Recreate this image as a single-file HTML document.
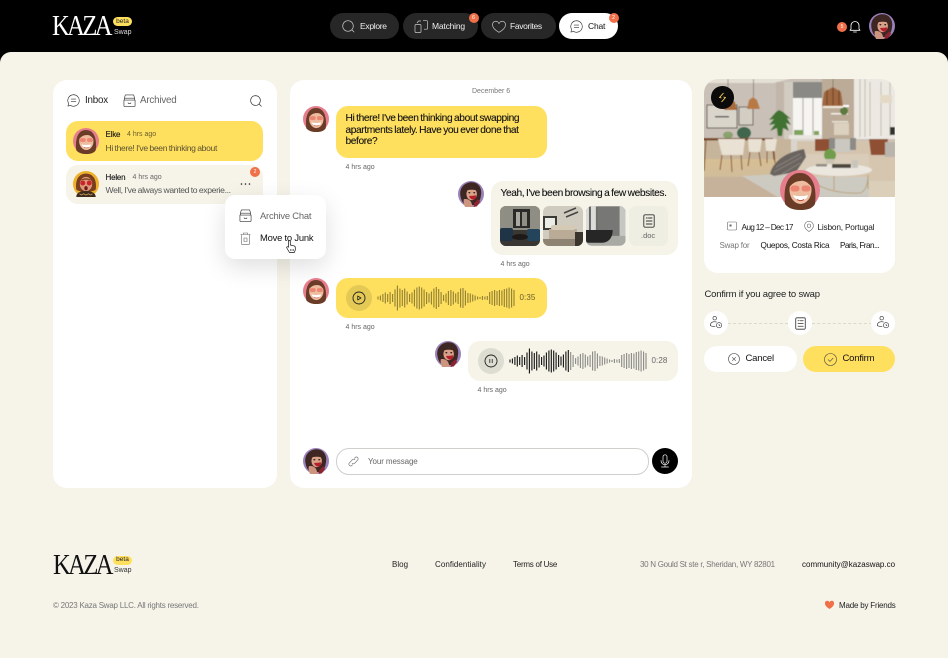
<!DOCTYPE html>
<html><head><meta charset="utf-8"><title>Kaza Swap</title>
<style>
*{box-sizing:border-box}
html,body{margin:0;padding:0;width:948px;height:658px;overflow:hidden;background:#000}
body{font-family:"Liberation Sans",sans-serif;position:relative;color:#111}
.a,.t{position:absolute}
.t{white-space:nowrap;line-height:12px;height:12px;letter-spacing:-.2px}
.b{font-size:10.2px;letter-spacing:-.4px;word-spacing:-.6px;color:#111;-webkit-text-stroke:.1px #111}
.m{font-size:8.6px;letter-spacing:-.35px;word-spacing:-.4px}
.main{position:absolute;left:0;top:52px;width:948px;height:606px;background:#f6f4e9;border-radius:11px 11px 0 0}
.card{position:absolute;background:#fff;border-radius:14px}
.pill{position:absolute;top:13px;height:26px;border-radius:13px;background:#272727}
.badge{position:absolute;border-radius:50%;background:#f0704a;color:#fff;font-size:5px;line-height:10px;text-align:center;width:10px;height:10px}
.g{font-size:7px;color:#666;letter-spacing:0}
svg{position:absolute;overflow:visible}
.s{fill:none;stroke:#333;stroke-width:.7;stroke-linecap:round;stroke-linejoin:round}
.bl{filter:blur(.35px)}
.logo{height:34px;line-height:34px;font-family:'Liberation Serif',serif;font-size:29px;letter-spacing:-3px;transform:scaleX(.846);transform-origin:0 50%}
</style></head><body>
<svg width="0" height="0" style="position:absolute">
<defs>
<symbol id="elke" viewBox="0 0 40 40">
<circle cx="20" cy="20" r="20" fill="#e67d8c"/>
<path d="M5 34C3 18 7 3 20 3c13 0 17 15 15 31-3 5-8 6-15 6S8 38 5 34z" fill="#6a3c28"/>
<ellipse cx="20.500" cy="20" rx="11" ry="14" fill="#eebd9f"/>
<path d="M9.500 17c1-9 5-11 11-11 7 0 10 4 11 11-3-4-7-7-11-6-4 0-8 2-11 6z" fill="#6a3c28"/>
<rect x="10.500" y="15.500" width="9" height="6" rx="2.800" fill="#ec7768" opacity=".8"/>
<rect x="21.500" y="15.500" width="9" height="6" rx="2.800" fill="#ec7768" opacity=".8"/>
<path d="M13 25c3 1.500 12 1.500 15 0-1 7-13 7-15 0z" fill="#fff"/>
<path d="M17 29.500c2 1.500 5 1.500 7 0" stroke="#b2423f" stroke-width=".9" fill="none"/>
</symbol>
<symbol id="user" viewBox="0 0 40 40">
<circle cx="20" cy="20" r="20" fill="#9a82bb"/>
<path d="M4 24C1 10 11 2 21 2c11 0 17 10 14 22-1 7-5 12-10 13H12C8 35 5 30 4 24z" fill="#3e2622"/>
<ellipse cx="21" cy="20" rx="8" ry="9.500" fill="#d9a188"/>
<path d="M12 15c4-6 14-6 18 0-5-2-13-2-18 0z" fill="#3e2622"/>
<ellipse cx="17.500" cy="18" rx="1.500" ry="1" fill="#2b1a18"/><ellipse cx="25" cy="18" rx="1.500" ry="1" fill="#2b1a18"/>
<path d="M17 23c2 6 8 7 10 4 1-2 1-4 0-5-3 1-7 1-10 1z" fill="#b51f2c"/>
<path d="M9 28c4-1 8 0 11 4l3 8H11c-2-3-3-8-2-12z" fill="#cd9580"/>
<path d="M25 34l6-6 3 4-5 7-5 1z" fill="#8c2430"/>
</symbol>
<symbol id="helen" viewBox="0 0 40 40">
<circle cx="20" cy="20" r="20" fill="#eeb12c"/>
<path d="M5 28C3 12 10 4 20 4s17 8 15 24c-2 5-28 5-30 0z" fill="#7a3d1d"/>
<ellipse cx="20" cy="20" rx="9.500" ry="11" fill="#dd9a78"/>
<path d="M11 15c3-5 15-5 18 0-5-2-13-2-18 0z" fill="#7a3d1d"/>
<circle cx="15" cy="18.500" r="3.800" fill="#c8242d"/><circle cx="25" cy="18.500" r="3.800" fill="#c8242d"/>
<ellipse cx="20" cy="26.500" rx="2.600" ry="3.200" fill="#6e1a1a"/>
<path d="M5 40c0-7 8-10 15-9 7-1 15 3 15 9z" fill="#3c2a1c"/>
<path d="M10 35l3 2 3-2 4 2 4-2 3 2 3-2" fill="none" stroke="#c89c5c" stroke-width="1.300"/>
</symbol>
<symbol id="archive" viewBox="0 0 14 14"><path class="s" d="M2.500 1h9l1 3.500h-11zM1.500 4.500h11v2h-11zM1 6.500h12v6a1 1 0 0 1-1 1H2a1 1 0 0 1-1-1zM5.500 9.500c0 1 3 1 3 0"/></symbol>
<symbol id="chat" viewBox="0 0 14 14"><path class="s" d="M7 .8a6.200 6.200 0 1 1-3.200 11.500L1 13l.8-2.700A6.200 6.200 0 0 1 7 .8zM4.500 5.500h5M4.500 8.300h5"/></symbol>
<symbol id="swapu" viewBox="0 0 16 16"><path class="s" d="M4.500 2.500a2 2 0 1 1 4 0 2 2 0 0 1-4 0zM1.500 11c0-3 2-4.500 5-4.500 1 0 1.500.2 2 .4M1.500 11c2 1 4 1 5.500.7"/><circle class="s" cx="11.500" cy="10.500" r="3"/><path class="s" d="M11.500 9.200v1.300l1 .6"/></symbol>
<symbol id="doc" viewBox="0 0 12 14"><path class="s" style="stroke-width:.9" d="M2 .8h8a1.200 1.200 0 0 1 1.200 1.200v10a1.200 1.200 0 0 1-1.200 1.200H2A1.200 1.200 0 0 1 .8 12V2A1.200 1.200 0 0 1 2 .8zM3.300 4h1M5.500 4h3.500M3.300 7h5.700M3.300 10h5.700"/></symbol>
<path id="w1" d="M0-1.500V1.500M2.400-2.500V2.500M4.900-4V4M7.300-5.500V5.500M9.700-4V4M12.100-6V6M14.600-4V4M17-8.500V8.500M19.400-12.500V12.500M21.900-9.500V9.500M24.300-8V8M26.700-9.500V9.500M29.100-6.500V6.500M31.600-4V4M34-5.500V5.500M36.400-8.500V8.500M38.900-10.500V10.500M41.300-11.500V11.500M43.700-10.500V10.500M46.100-8.500V8.500M48.600-6V6M51-4.500V4.500M53.400-6.500V6.500M55.900-9.500V9.500M58.300-11V11"/>
<path id="w2" d="M60.700-9V9M63.100-6V6M65.600-3V3M68-4.500V4.500M70.400-7V7M72.900-8V8M75.300-6.500V6.500M77.700-4.500V4.500M80.100-6V6M82.600-9.500V9.500M85-10V10M87.400-7.500V7.500M89.900-5V5M92.300-4.500V4.500M94.700-3.500V3.500M97.100-2.500V2.500M99.600-1.500V1.500M102-1V1M104.400-2V2M106.900-1.500V1.500M109.300-2V2M111.700-6V6M114.100-7V7M116.600-8V8M119-7V7M121.400-8V8M123.900-7.500V7.500M126.300-9V9M128.700-9.500V9.500M131.100-10.500V10.500M133.600-9.500V9.500M136-8V8"/>
</defs>
</svg>

<!-- HEADER -->
<div class="t logo" style="left:52px;top:9px;color:#fff">KAZA</div>
<div class="a" style="left:113px;top:17px;width:19px;height:9px;border-radius:5px;background:#ffdf5e"></div>
<div class="t" style="left:113px;top:15.500px;width:19px;text-align:center;font-size:6.500px;color:#222;letter-spacing:0">beta</div>
<div class="t" style="left:114px;top:27px;font-size:7px;color:#ddd;letter-spacing:0">Swap</div>

<div class="pill" style="left:330px;width:69px"></div>
<svg style="left:342px;top:20px" width="13" height="13" viewBox="0 0 13 13"><path d="M6 .7a5.300 5.300 0 1 0 0 10.600A5.300 5.300 0 0 0 6 .7zM10 10l2 2" fill="none" stroke="#ccc" stroke-width=".7" stroke-linecap="round"/></svg>
<div class="t" style="left:360px;top:20px;font-size:8.500px;color:#eee;letter-spacing:-.3px">Explore</div>
<div class="pill" style="left:403px;width:75px"></div>
<svg style="left:414px;top:20px" width="14" height="13" viewBox="0 0 14 13"><path d="M1 5.500a1 1 0 0 1 1-1h4a1 1 0 0 1 1 1v6a1 1 0 0 1-1 1H2a1 1 0 0 1-1-1zM9 .7h3.500a1 1 0 0 1 1 1v6.500a1 1 0 0 1-1 1H10M3 3l1.500-2H7" fill="none" stroke="#ccc" stroke-width=".7"/></svg>
<div class="t" style="left:432px;top:20px;font-size:8.500px;color:#eee">Matching</div>
<div class="badge" style="left:468.500px;top:13px">6</div>
<div class="pill" style="left:481px;width:75px"></div>
<svg style="left:492px;top:20.500px" width="14" height="12" viewBox="0 0 14 12"><path d="M7 11.300C3 9 .6 7 .6 4.200A3.200 3.200 0 0 1 7 2.800a3.200 3.200 0 0 1 6.400 1.400C13.400 7 11 9 7 11.300z" fill="none" stroke="#ccc" stroke-width=".7"/></svg>
<div class="t" style="left:510px;top:20px;font-size:8.500px;color:#eee;letter-spacing:-.35px">Favorites</div>
<div class="pill" style="left:559px;width:59px;background:#fff"></div>
<svg style="left:570px;top:20px" width="13" height="13"><use href="#chat" width="13" height="13"/></svg>
<div class="t" style="left:588px;top:20px;font-size:8.500px;color:#111">Chat</div>
<div class="badge" style="left:608.500px;top:13px">2</div>

<div class="badge" style="left:837px;top:21.500px">5</div>
<svg style="left:849px;top:20px" width="12" height="13" viewBox="0 0 12 13"><path d="M2 9V5.500a4 4 0 0 1 8 0V9l1 1.300H1zM4.500 12h3" fill="none" stroke="#fff" stroke-width=".8" stroke-linejoin="round" stroke-linecap="round"/></svg>
<svg class="bl" style="left:869px;top:13px" width="26" height="26"><use href="#user" width="26" height="26"/></svg>

<div class="main"></div>

<!-- LEFT CARD -->
<div class="card" style="left:53px;top:80px;width:224px;height:408px"></div>
<svg style="left:67px;top:94px" width="13" height="13"><use href="#chat" width="13" height="13"/></svg>
<div class="t" style="left:85px;top:95px;font-size:9.800px;color:#222">Inbox</div>
<svg style="left:122.500px;top:94px" width="13" height="13"><use href="#archive" width="13" height="13"/></svg>
<div class="t" style="left:140px;top:95px;font-size:9.800px;color:#666">Archived</div>
<svg style="left:249.500px;top:94.500px" width="12" height="12" viewBox="0 0 12 12"><path class="s" d="M5.500.6a4.900 4.900 0 1 0 0 9.800 4.900 4.900 0 0 0 0-9.800zM9.300 9.300l2 2"/></svg>

<div class="a" style="left:66px;top:121px;width:197px;height:40px;border-radius:12px;background:#ffdf5e"></div>
<svg class="bl" style="left:72.500px;top:128px" width="26" height="26"><use href="#elke" width="26" height="26"/></svg>
<div class="t" style="left:105.500px;top:129px;font-size:8px;color:#111;-webkit-text-stroke:.1px #111">Elke</div>
<div class="t g" style="left:127px;top:129px;color:#6b5f2c">4 hrs ago</div>
<div class="t m" style="left:105.500px;top:141.500px;color:#5a5230">Hi there! I've been thinking about</div>

<div class="a" style="left:66px;top:165px;width:197px;height:39px;border-radius:12px;background:#f6f4e9"></div>
<svg class="bl" style="left:72.500px;top:171px" width="26" height="26"><use href="#helen" width="26" height="26"/></svg>
<div class="t" style="left:105.500px;top:172px;font-size:8px;color:#111;-webkit-text-stroke:.1px #111">Helen</div>
<div class="t g" style="left:132.500px;top:172px">4 hrs ago</div>
<div class="t m" style="left:105.500px;top:184px;color:#555">Well, I've always wanted to experie...</div>
<svg style="left:240px;top:182px" width="11" height="4"><circle cx="1.500" cy="2" r=".8" fill="#222"/><circle cx="5.500" cy="2" r=".8" fill="#222"/><circle cx="9.500" cy="2" r=".8" fill="#222"/></svg>
<div class="badge" style="left:250px;top:167px">2</div>

<!-- CHAT CARD -->
<div class="card" style="left:290px;top:80px;width:401.500px;height:408px"></div>

<!-- POPUP -->
<div class="a" style="left:225px;top:195px;width:101px;height:64px;border-radius:10px;background:#fff;box-shadow:0 8px 24px rgba(0,0,0,.13)"></div>
<svg style="left:239px;top:209px" width="13" height="13"><use href="#archive" width="13" height="13"/></svg>
<div class="t" style="left:260px;top:210px;font-size:9.400px;color:#666">Archive Chat</div>
<svg style="left:240px;top:231.500px" width="11" height="13" viewBox="0 0 11 13"><path d="M.5 2.500h10M3.500 2.500V1h4v1.500M1.500 2.500v9.300a.8.8 0 0 0 .8.8h6.400a.8.8 0 0 0 .8-.8V2.500M4 6h3v3.500H4z" fill="none" stroke="#666" stroke-width=".6"/></svg>
<div class="t" style="left:260px;top:232px;font-size:9.400px;color:#111">Move to Junk</div>
<svg style="left:285.500px;top:240px" width="10" height="13" viewBox="0 0 10 13"><path d="M2.500 6V1.500a.9.900 0 0 1 1.800 0V5l3.500.8c1 .2 1.500.8 1.500 1.700V10l-1 2.500H3.500L.8 8c-.5-1 .6-1.800 1.700-.8z" fill="#fff" stroke="#111" stroke-width=".7" stroke-linejoin="round"/><path d="M4.500 9v2M6 9v2M7.500 9v2" stroke="#111" stroke-width=".5"/></svg>

<div class="t" style="left:472px;top:86px;font-size:7px;color:#777;letter-spacing:0">December 6</div>

<svg class="bl" style="left:303px;top:105.500px" width="26" height="26"><use href="#elke" width="26" height="26"/></svg>
<div class="a" style="left:336px;top:106px;width:210.500px;height:51.500px;border-radius:12px;background:#ffdf5e"></div>
<div class="t b" style="left:345.500px;top:112.500px">Hi there! I've been thinking about swapping</div>
<div class="t b" style="left:345.500px;top:124.500px">apartments lately. Have you ever done that</div>
<div class="t b" style="left:345.500px;top:136px">before?</div>
<div class="t g" style="left:345.500px;top:161.500px">4 hrs ago</div>

<svg class="bl" style="left:458px;top:181px" width="26" height="26"><use href="#user" width="26" height="26"/></svg>
<div class="a" style="left:491px;top:181px;width:187px;height:74px;border-radius:12px;background:#f6f4e9"></div>
<div class="t b" style="left:500.500px;top:187.500px">Yeah, I've been browsing a few websites.</div>
<svg class="bl" style="left:500px;top:205.500px" width="40" height="40" viewBox="0 0 40 40"><defs><clipPath id="c1"><rect width="40" height="40" rx="6"/></clipPath></defs><g clip-path="url(#c1)"><rect width="40" height="40" fill="#6d6c64"/><rect width="40" height="24" fill="#8f8e85"/><rect x="13" y="3" width="17" height="19" fill="#2b2a28"/><rect x="16" y="6" width="4" height="14" fill="#a9a99f"/><rect x="22" y="6" width="5" height="14" fill="#8f8f86"/><rect y="24" width="40" height="16" fill="#3a3631"/><rect x="0" y="22" width="13" height="13" rx="2" fill="#1f3547"/><rect x="27" y="23" width="13" height="12" rx="2" fill="#24445c"/><ellipse cx="20" cy="31" rx="8" ry="3" fill="#1d1a18"/></g></svg>
<svg class="bl" style="left:543px;top:205.500px" width="40" height="40" viewBox="0 0 40 40"><defs><clipPath id="c2"><rect width="40" height="40" rx="6"/></clipPath></defs><g clip-path="url(#c2)"><rect width="40" height="40" fill="#d0cbbf"/><path d="M21 7l12-5M23 11l12-5" stroke="#444" stroke-width="1.500"/><rect x="0" y="10" width="14" height="14" fill="#3b3a36"/><rect x="2" y="12" width="10" height="10" fill="#ecece6"/><rect x="6" y="23" width="28" height="10" fill="#b9ab95"/><rect x="8" y="19" width="24" height="5" rx="2" fill="#d5cab6"/><rect y="33" width="40" height="7" fill="#8e8272"/><rect x="32" y="26" width="8" height="14" fill="#3a342d"/></g></svg>
<svg class="bl" style="left:586px;top:205.500px" width="39.500" height="40" viewBox="0 0 40 40"><defs><clipPath id="c3"><rect width="40" height="40" rx="6"/></clipPath></defs><g clip-path="url(#c3)"><rect width="40" height="40" fill="#6f6f6d"/><rect x="12" width="24" height="30" fill="#777775"/><rect width="10" height="30" fill="#dcdcd8"/><rect x="3" width="2" height="30" fill="#666"/><rect x="34" width="6" height="40" fill="#c6c6c2"/><rect y="30" width="40" height="10" fill="#aaaaa5"/><path d="M0 24h27c0 8-4 13-12 13H3c-2 0-3-1-3-2z" fill="#262626"/></g></svg>
<div class="a" style="left:629px;top:205.500px;width:39px;height:40px;border-radius:7px;background:#efeee3"></div>
<svg style="left:642.500px;top:214px" width="12" height="14"><use href="#doc" width="12" height="14"/></svg>
<div class="t g" style="left:641px;top:229.500px;font-size:7.500px;color:#666">.doc</div>
<div class="t g" style="left:500.500px;top:259px">4 hrs ago</div>

<svg class="bl" style="left:303px;top:278px" width="26" height="26"><use href="#elke" width="26" height="26"/></svg>
<div class="a" style="left:336px;top:278px;width:210.500px;height:40px;border-radius:12px;background:#ffdf5e"></div>
<div class="a" style="left:346px;top:285px;width:26px;height:26px;border-radius:50%;background:#e4c955"></div>
<svg style="left:352px;top:291px" width="14" height="14" viewBox="0 0 14 14"><circle cx="7" cy="7" r="6" fill="none" stroke="#222" stroke-width=".9"/><path d="M5.700 5v4L9 7z" fill="none" stroke="#222" stroke-width=".8" stroke-linejoin="round"/></svg>
<svg style="left:378px;top:298px" width="136" height="1" fill="none" stroke="#8f7f34" stroke-width="1.100"><use href="#w1"/><use href="#w2"/></svg>
<div class="t" style="left:519.500px;top:292px;font-size:8px;color:#6b5f2c;letter-spacing:.1px">0:35</div>
<div class="t g" style="left:345.500px;top:322px">4 hrs ago</div>

<svg class="bl" style="left:434.500px;top:341px" width="26" height="26"><use href="#user" width="26" height="26"/></svg>
<div class="a" style="left:468px;top:341px;width:210px;height:39.500px;border-radius:12px;background:#f6f4e9"></div>
<div class="a" style="left:477.500px;top:347.500px;width:26px;height:26px;border-radius:50%;background:#deddd2"></div>
<svg style="left:483.500px;top:353.500px" width="14" height="14" viewBox="0 0 14 14"><circle cx="7" cy="7" r="6" fill="none" stroke="#222" stroke-width=".9"/><path d="M5.800 5v4M8.200 5v4" stroke="#222" stroke-width=".8"/></svg>
<svg style="left:510px;top:360.500px" width="136" height="1" fill="none" stroke-width="1.100"><use href="#w1" stroke="#111"/><use href="#w2" stroke="#8a8a85"/></svg>
<div class="t" style="left:651.500px;top:355px;font-size:8px;color:#666;letter-spacing:.1px">0:28</div>
<div class="t g" style="left:477.500px;top:384.500px">4 hrs ago</div>

<svg class="bl" style="left:303px;top:448px" width="26" height="26"><use href="#user" width="26" height="26"/></svg>
<div class="a" style="left:336px;top:448px;width:312.500px;height:26.500px;border-radius:13px;border:.8px solid #cfcfcb;background:#fff"></div>
<svg style="left:347.500px;top:456px" width="11" height="11" viewBox="0 0 11 11"><path d="M6.500 2.200l1-1a1.900 1.900 0 0 1 2.500 2.500L6.700 7.200a1.900 1.900 0 0 1-2.600 0M4.500 8.800l-1 1A1.900 1.900 0 0 1 1 7.300l3.300-3.500a1.900 1.900 0 0 1 2.600 0" fill="none" stroke="#777" stroke-width=".7" stroke-linecap="round"/></svg>
<div class="t" style="left:368px;top:456px;font-size:8px;color:#666;letter-spacing:-.1px">Your message</div>
<div class="a" style="left:652px;top:448px;width:26px;height:26px;border-radius:50%;background:#000"></div>
<svg style="left:660px;top:454px" width="10" height="14" viewBox="0 0 10 14"><path d="M5 .8a2 2 0 0 1 2 2v4.400a2 2 0 0 1-4 0V2.800a2 2 0 0 1 2-2zM1 6.500c0 5.500 8 5.500 8 0M5 10.700v1.800M1.500 13h7" fill="none" stroke="#fff" stroke-width=".7" stroke-linecap="round"/></svg>

<!-- RIGHT CARD -->
<div class="card" style="left:704px;top:79px;width:191px;height:194px"></div>
<svg style="left:704px;top:79px" width="191" height="118" viewBox="0 0 191 118">
<defs><clipPath id="rc"><path d="M14 0h163a14 14 0 0 1 14 14v104H0V14A14 14 0 0 1 14 0z"/></clipPath>
<linearGradient id="fl" x1="0" y1="0" x2="0" y2="1"><stop offset="0" stop-color="#d8bf93"/><stop offset="1" stop-color="#c9b9a3"/></linearGradient>
<filter id="sf" x="-5%" y="-5%" width="110%" height="110%"><feGaussianBlur stdDeviation=".55"/></filter></defs>
<g clip-path="url(#rc)"><g filter="url(#sf)">
<rect x="-3" y="-3" width="197" height="124" fill="#c9c1b7"/>
<path d="M-3-3h100L70 4H-3z" fill="#e5e0d6"/>
<rect x="72" y="3" width="17" height="57" fill="#c1b6a9"/>
<rect x="80" y="3" width="9" height="57" fill="#d2cbc1"/>
<rect x="89" y="3" width="30" height="16" fill="#8a8985"/>
<rect x="89" y="19" width="29" height="37" fill="#f6f5f1"/>
<path d="M99 19v37M109 19v37" stroke="#b7b0a6" stroke-width="1.200"/>
<rect x="85" y="56" width="34" height="4" fill="#e9e6df"/>
<rect x="90" y="51" width="9" height="5" fill="#7ea35a"/><rect x="110" y="52" width="5" height="4" fill="#7ea35a"/>
<rect x="118" y="0" width="32" height="60" fill="#bcab97"/>
<rect x="125" y="26" width="20" height="2" fill="#fff"/><rect x="127" y="34" width="17" height="1.500" fill="#f2eee6"/><rect x="128" y="42" width="16" height="1.500" fill="#e9e3d8"/>
<rect x="130" y="44" width="15" height="12" fill="#dcd1be"/>
<ellipse cx="140" cy="32" rx="4" ry="4" fill="#5c7a3e"/>
<rect x="150" y="-3" width="44" height="63" fill="#ece9e3"/>
<path d="M156 0v58M161 0v58M166 3v54M177 3v54M186 3v54" stroke="#c9c3b8" stroke-width="1.200"/>
<rect x="176" y="16" width="12" height="8" fill="#e3d9c4"/>
<rect x="186" y="48" width="5" height="8" fill="#33312e"/>
<rect x="3" y="26" width="30" height="23" fill="#dad5cb" stroke="#3a3630" stroke-width=".8"/>
<rect x="11" y="37" width="14" height="1.500" fill="#555"/>
<rect x="35" y="28" width="14" height="18" fill="#d3cec4" stroke="#4b453e" stroke-width=".8"/>
<path d="M49.500 0v18M24 0v20M129 0v9" stroke="#6e6255" stroke-width=".6"/>
<path d="M43 30l2-9 4-3 4 3 3 9z" fill="#b87a45"/>
<path d="M20 31l1-8 5-3 5 3 2 8z" fill="#a96a39"/>
<path d="M118 27l2-14 9-5 8 5 2 14z" fill="#a0673f"/>
<path d="M123 11v15M129 9v17M135 11v15" stroke="#633d24" stroke-width=".9"/>
<rect x="119" y="27" width="20" height="2" fill="#f3ead9"/>
<path d="M72 33l-7 8 5-1-5 6 6-1-5 7 7-3 1 8h4l1-8 6 3-3-8 5 2-4-7 4 1-8-7-4-2z" fill="#3f7330"/>
<rect x="85" y="60" width="30" height="16" fill="#d9d5cd"/>
<rect x="-3" y="76" width="197" height="45" fill="url(#fl)"/>
<rect x="-3" y="60" width="90" height="20" fill="#c7b59b"/>
<ellipse cx="40" cy="54" rx="7" ry="6" fill="#40664e"/><ellipse cx="24" cy="56" rx="5" ry="3.500" fill="#8aa26e"/>
<rect x="-3" y="59" width="72" height="2.500" fill="#7a4a28"/>
<path d="M2 61L0 92M68 61l2 20" stroke="#7a4a28" stroke-width="1"/>
<path d="M14 60h27l-2 16H18zM44 60h14l-2 13H45zM61 60h12l-2 12H62z" fill="#e9e1d3"/>
<path d="M18 76l-2 15M27 76l1 17M37 76l1 15M46 73l-2 14M55 73l2 14M63 72v12M70 72l1 12" stroke="#8a5730" stroke-width="1"/>
<path d="M0 98h46l26 20H0z" fill="#c6b19b"/>
<path d="M38 97l90-5 38 4 6 22H74z" fill="#cdcac2"/>
<path d="M93 62h98v36H93z" fill="#d5c4ad"/>
<rect x="93" y="75" width="72" height="16" fill="#d9ccb8"/>
<rect x="165" y="78" width="29" height="24" rx="3" fill="#d6c6b0"/>
<path d="M111 60h14v12h-14zM165 60h19l-2 16h-15z" fill="#8e4f32"/>
<path d="M131 60h15l2 13h-17z" fill="#cbc8c2"/><path d="M125 59h6v11h-6zM146 59h6v12h-6z" fill="#8d8b86"/><path d="M181 63h10v15h-10z" fill="#bab5ac"/>
<path d="M66 95c2-10 12-21 34-25l2 8-10 15-22 4z" fill="#6a645e"/>
<path d="M72 88l24-13M70 93l28-15M78 95l18-11" stroke="#8c8781" stroke-width=".8"/>
<ellipse cx="126" cy="76" rx="6" ry="6" fill="#6f9d4b"/>
<rect x="122" y="80" width="8" height="4" fill="#c9c3b5"/>
<ellipse cx="135" cy="91" rx="33" ry="6" fill="#ebe7df"/>
<rect x="128" y="85" width="19" height="4" fill="#4d4640"/><rect x="112" y="85" width="11" height="2.500" fill="#8e8a82"/><rect x="148" y="81" width="6" height="8" rx="1" fill="#c9c5bc"/>
<path d="M106 97c4 12 28 18 50 17 4-1 8-6 8-18M130 97v14M164 96v14" fill="none" stroke="#b59a5f" stroke-width=".8"/>
<rect x="165" y="102" width="29" height="19" fill="#dccfb9"/>
</g></g></svg>
<div class="a" style="left:711px;top:86px;width:22.500px;height:22.500px;border-radius:50%;background:#0b0b0b"></div>
<svg style="left:717px;top:92px" width="11" height="11" viewBox="0 0 11 11"><path d="M6.500 1L2.500 5.500l2 .5M4.500 10l4-4.500-2-.5" fill="none" stroke="#ffdf5e" stroke-width=".9" stroke-linejoin="round"/></svg>
<svg class="bl" style="left:780px;top:170px" width="40" height="40"><use href="#elke" width="40" height="40"/></svg>
<svg style="left:727px;top:221px" width="10" height="10" viewBox="0 0 10 10"><rect x=".5" y="1" width="9" height="8" rx="1" fill="none" stroke="#666" stroke-width=".6"/><rect x="2.500" y="3.500" width="2" height="2" fill="#666"/></svg>
<div class="t" style="left:741.500px;top:220.500px;font-size:8.300px;color:#222;letter-spacing:-.7px">Aug 12 – Dec 17</div>
<svg style="left:803.500px;top:221px" width="10" height="11" viewBox="0 0 10 11"><path d="M5 10.500C2 8.500.6 6.500.6 4.700a4.400 4.400 0 0 1 8.800 0C9.400 6.500 8 8.500 5 10.500z" fill="none" stroke="#666" stroke-width=".6"/><circle cx="5" cy="4.700" r="1.700" fill="none" stroke="#666" stroke-width=".6"/></svg>
<div class="t" style="left:817.500px;top:220.500px;font-size:8.300px;color:#222">Lisbon, Portugal</div>
<div class="t" style="left:719.500px;top:240px;font-size:8px;color:#777">Swap for</div>
<div class="t" style="left:760.500px;top:240px;font-size:8.200px;color:#111;letter-spacing:-.25px">Quepos, Costa Rica</div>
<div class="t" style="left:840px;top:240px;font-size:8.200px;color:#111;letter-spacing:-.55px">Paris, Fran...</div>

<div class="t" style="left:704.500px;top:289px;font-size:9.500px;color:#222">Confirm if you agree to swap</div>
<div class="a" style="left:728px;top:323px;width:60px;border-top:1px dashed #dcd9c9"></div>
<div class="a" style="left:812px;top:323px;width:60px;border-top:1px dashed #dcd9c9"></div>
<div class="a" style="left:704px;top:311px;width:24px;height:24px;border-radius:50%;background:#fff"></div>
<div class="a" style="left:788px;top:311px;width:24px;height:24px;border-radius:50%;background:#fff"></div>
<div class="a" style="left:871px;top:311px;width:24px;height:24px;border-radius:50%;background:#fff"></div>
<svg style="left:709px;top:316px" width="14" height="14"><use href="#swapu" width="14" height="14"/></svg>
<svg style="left:794.500px;top:317px" width="11" height="13"><use href="#doc" width="11" height="13"/></svg>
<svg style="left:876px;top:316px" width="14" height="14"><use href="#swapu" width="14" height="14"/></svg>

<div class="a" style="left:704px;top:345.500px;width:93px;height:26.500px;border-radius:13px;background:#fff"></div>
<svg style="left:728px;top:353px" width="12" height="12" viewBox="0 0 12 12"><circle cx="6" cy="6" r="5.500" fill="none" stroke="#444" stroke-width=".6"/><path d="M4.200 4.200l3.600 3.600M7.800 4.200L4.200 7.800" stroke="#444" stroke-width=".6"/></svg>
<div class="t" style="left:745.500px;top:353px;font-size:9.500px;color:#111">Cancel</div>
<div class="a" style="left:803px;top:345.500px;width:92px;height:26.500px;border-radius:13px;background:#ffdf5e"></div>
<svg style="left:824px;top:352.500px" width="13" height="13" viewBox="0 0 13 13"><circle cx="6.500" cy="6.500" r="6" fill="none" stroke="#444" stroke-width=".6"/><path d="M4 6.500l2 2 3.200-3.500" fill="none" stroke="#444" stroke-width=".6"/></svg>
<div class="t" style="left:842.500px;top:353px;font-size:9.500px;color:#111">Confirm</div>

<!-- FOOTER -->
<div class="t logo" style="left:52.500px;top:548px;color:#111">KAZA</div>
<div class="a" style="left:113px;top:555.500px;width:19px;height:9px;border-radius:5px;background:#ffdf5e"></div>
<div class="t" style="left:113px;top:554px;width:19px;text-align:center;font-size:6.500px;color:#222;letter-spacing:0">beta</div>
<div class="t" style="left:114px;top:565px;font-size:7px;color:#333;letter-spacing:0">Swap</div>
<div class="t" style="left:392px;top:559px;font-size:8px;color:#222;letter-spacing:0">Blog</div>
<div class="t" style="left:435px;top:559px;font-size:8px;color:#222;letter-spacing:.05px">Confidentiality</div>
<div class="t" style="left:513px;top:559px;font-size:8px;color:#222;letter-spacing:-.25px">Terms of Use</div>
<div class="t" style="left:640px;top:559px;font-size:8px;color:#777;letter-spacing:-.28px">30 N Gould St ste r, Sheridan, WY 82801</div>
<div class="t" style="left:802px;top:559px;font-size:8px;color:#111;letter-spacing:0">community@kazaswap.co</div>
<div class="t" style="left:53px;top:599.500px;font-size:8px;color:#777;letter-spacing:-.24px">© 2023 Kaza Swap LLC. All rights reserved.</div>
<svg style="left:825px;top:601px" width="9" height="8" viewBox="0 0 9 8"><path d="M4.500 8C1.500 6 0 4.500 0 2.500A2.300 2.300 0 0 1 4.500 1.500 2.300 2.300 0 0 1 9 2.500C9 4.500 7.500 6 4.500 8z" fill="#f0704a"/></svg>
<div class="t" style="left:839px;top:599.500px;font-size:8px;color:#222">Made by Friends</div>
</body></html>
